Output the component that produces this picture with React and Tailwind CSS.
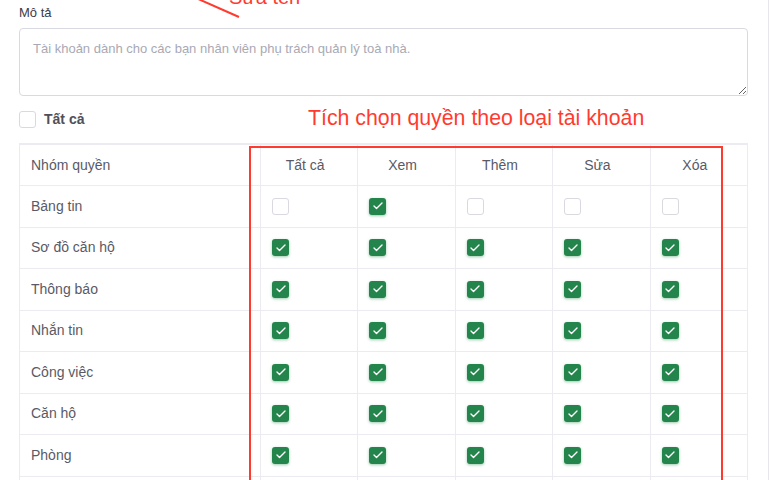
import { Check } from 'lucide-react'

const COLS = ['Tất cả', 'Xem', 'Thêm', 'Sửa', 'Xóa']

const ROWS = [
  { name: 'Bảng tin', perms: [false, true, false, false, false] },
  { name: 'Sơ đồ căn hộ', perms: [true, true, true, true, true] },
  { name: 'Thông báo', perms: [true, true, true, true, true] },
  { name: 'Nhắn tin', perms: [true, true, true, true, true] },
  { name: 'Công việc', perms: [true, true, true, true, true] },
  { name: 'Căn hộ', perms: [true, true, true, true, true] },
  { name: 'Phòng', perms: [true, true, true, true, true] },
  { name: 'Cư dân', perms: [true, true, true, true, true] },
]

function Box({ checked }) {
  if (checked) {
    return (
      <span className="flex h-[17px] w-[17px] items-center justify-center rounded-[3px] bg-[#23854b] shadow-[0_1px_3px_rgba(35,133,75,0.45)]">
        <Check size={12} strokeWidth={2.75} className="text-white" />
      </span>
    )
  }
  return <span className="block h-[17px] w-[17px] rounded-[3px] border border-[#d9d9e1] bg-white" />
}

export default function App() {
  return (
    <div className="relative h-[480px] w-[770px] overflow-hidden bg-white font-['Liberation_Sans',Arial,sans-serif]">
      <div className="h-full w-[769px] border-r border-[#e6e6ec] pl-[19px] pt-[5px]">
        <label className="block text-[13px] leading-[16px] text-[#3b3b45]">Mô tả</label>
        <textarea
          readOnly
          placeholder="Tài khoản dành cho các bạn nhân viên phụ trách quản lý toà nhà."
          className="mt-[7px] block h-[68px] w-[729px] resize-y rounded-[4px] border border-[#d9d9e1] px-[13px] py-[10px] text-[13px] leading-[20px] text-[#333] outline-none placeholder:text-[#a9a9b4]"
        />
        <div className="mt-[13px] flex items-center gap-[8px]">
          <Box checked={false} />
          <span className="text-[14px] font-semibold text-[#50505b]">Tất cả</span>
        </div>

        <div className="mt-[13px] w-[729px] border-l border-r border-t-2 border-[#ebebf1] text-[14px] text-[#5a5a66]">
          <div className="grid h-[41px] grid-cols-[240px_repeat(5,1fr)] border-b border-[#ebebf1]">
            <div className="flex items-center pl-[11px]">Nhóm quyền</div>
            {COLS.map((c) => (
              <div key={c} className="flex items-center justify-center border-l border-[#ebebf1] pr-[8px]">
                {c}
              </div>
            ))}
          </div>
          {ROWS.map((r) => (
            <div key={r.name} className="grid h-[41.5px] grid-cols-[240px_repeat(5,1fr)] border-b border-[#ebebf1]">
              <div className="flex items-center pl-[11px]">{r.name}</div>
              {r.perms.map((p, i) => (
                <div key={i} className="flex items-center border-l border-[#ebebf1] pl-[11px]">
                  <Box checked={p} />
                </div>
              ))}
            </div>
          ))}
        </div>
      </div>

      {/* annotations */}
      <div className="absolute left-[229px] top-[-13px] text-[20px] leading-[20px] text-[#ff3b30]">Sửa tên</div>
      <svg className="absolute left-0 top-0" width="300" height="30">
        <line x1="196" y1="-2" x2="239" y2="17" stroke="#ff3b30" strokeWidth="2" />
      </svg>
      <div className="absolute left-[308px] top-[106px] text-[21.3px] leading-[24px] text-[#ff3b30]">
        Tích chọn quyền theo loại tài khoản
      </div>
      <div className="absolute left-[249px] top-[146px] h-[360px] w-[474px] border-2 border-[#ff3b30]" />
    </div>
  )
}
